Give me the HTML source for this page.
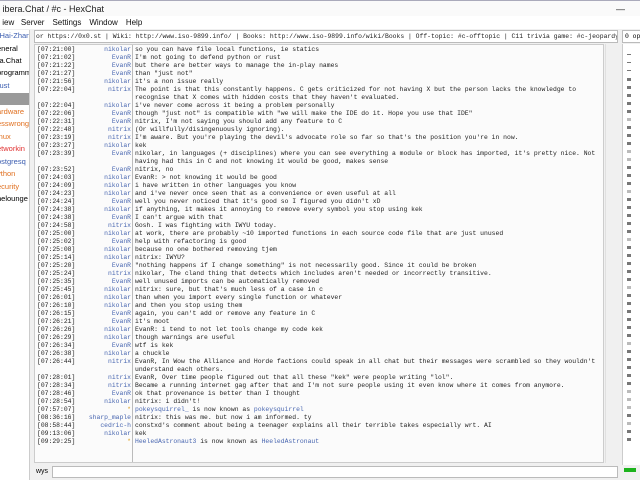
<!DOCTYPE html>
<html><head><meta charset="utf-8"><style>
*{margin:0;padding:0;box-sizing:border-box}
body{width:640px;height:480px;overflow:hidden;background:#f0f0f0;font-family:"Liberation Sans",sans-serif;position:relative}
.abs{position:absolute}
#title{left:0;top:0;width:640px;height:16px;background:#fafafa;font-size:9px;line-height:16px;color:#222;border-top:1px solid #aab}
#menu{left:0;top:16px;width:640px;height:13px;background:#fff;font-size:8px;line-height:13px;color:#111}
#menu span{margin-right:8px}
#side{left:0;top:30px;width:30px;height:450px;background:#fff;border-right:1px solid #ccc;font-size:7.5px;overflow:hidden}
#side div{position:absolute;left:-3px;white-space:nowrap;height:12px;line-height:12px;width:34px}
#topic{left:34px;top:30px;width:584px;height:13px;background:#fff;border:1px solid #bbb;font-family:"Liberation Mono",monospace;font-size:6.4px;line-height:11px;padding-left:1px;white-space:nowrap;overflow:hidden;color:#222}
#chat{left:34px;top:44px;width:570px;height:419px;background:#fbfbfb;border:1px solid #ccc;overflow:hidden}
#sep{left:97px;top:0;width:1px;height:419px;background:#bbb}
.r{position:absolute;left:0;height:8px;font-family:"Liberation Mono",monospace;font-size:6.4px;line-height:8px;white-space:nowrap;color:#222}
.t{position:absolute;left:2px}
.n{position:absolute;right:-96px;width:70px;text-align:right;color:#4866b0}
.r .m{position:absolute;left:100px}
#sb{left:605px;top:44px;width:13px;height:419px;background:#f0f0f0;border-left:1px solid #e0e0e0}
#ops{left:622px;top:30px;width:20px;height:13px;background:#fff;border:1px solid #bbb;font-family:"Liberation Mono",monospace;font-size:6.4px;line-height:11px;padding-left:2px}
#ul{left:622px;top:44px;width:20px;height:421px;background:#fff;border-left:1px solid #ccc}
#ul i{position:absolute;left:4px;width:4px;height:3px;background:#777}
#inp{left:34px;top:465px;width:584px;height:14px;font-size:7px;line-height:14px}
#inbox{left:52px;top:466px;width:566px;height:12px;background:#fff;border:1px solid #bbb}
#lag{left:624px;top:468px;width:12px;height:4px;background:#1db31d}
</style></head><body>
<div id="title" class="abs">&nbsp;ibera.Chat / #c - HexChat<span style="position:absolute;left:616px;top:0">—</span></div>
<div id="menu" class="abs">&nbsp;iew&nbsp;&nbsp;&nbsp;<span>Server</span><span>Settings</span><span>Window</span><span>Help</span></div>
<div id="side" class="abs">
<div style="top:0;color:#3b5db0">-Hai-Zhan</div>
<div style="top:13px">eneral</div>
<div style="top:25px">ra.Chat</div>
<div style="top:37px">programm</div>
<div style="top:50px;color:#3b5db0">rust</div>
<div style="top:63px;background:#9a9a9a;left:0"></div>
<div style="top:76px;color:#e07020">ardware</div>
<div style="top:88px;color:#e07020">esswrong</div>
<div style="top:101px;color:#e07020">inux</div>
<div style="top:113px;color:#e03030">etworkin</div>
<div style="top:126px;color:#3b5db0">ostgresq</div>
<div style="top:138px;color:#e07020">ython</div>
<div style="top:151px;color:#e07020">ecurity</div>
<div style="top:163px">helounge</div>
</div>
<div id="topic" class="abs">or https://0x0.st | Wiki: http://www.iso-9899.info/ | Books: http://www.iso-9899.info/wiki/Books | Off-topic: #c-offtopic | C11 trivia game: #c-jeopardy</div>
<div id="chat" class="abs">
<div id="sep" class="abs"></div>
<div class="r" style="top:1px"><span class="t">[07:21:00]</span><span class="n">nikolar</span><span class="m">so you can have file local functions, ie statics</span></div>
<div class="r" style="top:9px"><span class="t">[07:21:02]</span><span class="n">EvanR</span><span class="m">I'm not going to defend python or rust</span></div>
<div class="r" style="top:17px"><span class="t">[07:21:22]</span><span class="n">EvanR</span><span class="m">but there are better ways to manage the in-play names</span></div>
<div class="r" style="top:25px"><span class="t">[07:21:27]</span><span class="n">EvanR</span><span class="m">than "just not"</span></div>
<div class="r" style="top:33px"><span class="t">[07:21:56]</span><span class="n">nikolar</span><span class="m">it's a non issue really</span></div>
<div class="r" style="top:41px"><span class="t">[07:22:04]</span><span class="n">nitrix</span><span class="m">The point is that this constantly happens. C gets criticized for not having X but the person lacks the knowledge to</span></div>
<div class="r" style="top:49px"><span class="m">recognise that X comes with hidden costs that they haven't evaluated.</span></div>
<div class="r" style="top:57px"><span class="t">[07:22:04]</span><span class="n">nikolar</span><span class="m">i've never come across it being a problem personally</span></div>
<div class="r" style="top:65px"><span class="t">[07:22:06]</span><span class="n">EvanR</span><span class="m">though "just not" is compatible with "we will make the IDE do it. Hope you use that IDE"</span></div>
<div class="r" style="top:73px"><span class="t">[07:22:31]</span><span class="n">EvanR</span><span class="m">nitrix, I'm not saying you should add any feature to C</span></div>
<div class="r" style="top:81px"><span class="t">[07:22:48]</span><span class="n">nitrix</span><span class="m">(Or willfully/disingenuously ignoring).</span></div>
<div class="r" style="top:89px"><span class="t">[07:23:19]</span><span class="n">nitrix</span><span class="m">I'm aware. But you're playing the devil's advocate role so far so that's the position you're in now.</span></div>
<div class="r" style="top:97px"><span class="t">[07:23:27]</span><span class="n">nikolar</span><span class="m">kek</span></div>
<div class="r" style="top:105px"><span class="t">[07:23:39]</span><span class="n">EvanR</span><span class="m">nikolar, in languages (+ disciplines) where you can see everything a module or block has imported, it's pretty nice. Not</span></div>
<div class="r" style="top:113px"><span class="m">having had this in C and not knowing it would be good, makes sense</span></div>
<div class="r" style="top:121px"><span class="t">[07:23:52]</span><span class="n">EvanR</span><span class="m">nitrix, no</span></div>
<div class="r" style="top:129px"><span class="t">[07:24:03]</span><span class="n">nikolar</span><span class="m">EvanR: &gt; not knowing it would be good</span></div>
<div class="r" style="top:137px"><span class="t">[07:24:09]</span><span class="n">nikolar</span><span class="m">i have written in other languages you know</span></div>
<div class="r" style="top:145px"><span class="t">[07:24:23]</span><span class="n">nikolar</span><span class="m">and i've never once seen that as a convenience or even useful at all</span></div>
<div class="r" style="top:153px"><span class="t">[07:24:24]</span><span class="n">EvanR</span><span class="m">well you never noticed that it's good so I figured you didn't xD</span></div>
<div class="r" style="top:161px"><span class="t">[07:24:38]</span><span class="n">nikolar</span><span class="m">if anything, it makes it annoying to remove every symbol you stop using kek</span></div>
<div class="r" style="top:169px"><span class="t">[07:24:38]</span><span class="n">EvanR</span><span class="m">I can't argue with that</span></div>
<div class="r" style="top:177px"><span class="t">[07:24:58]</span><span class="n">nitrix</span><span class="m">Gosh. I was fighting with IWYU today.</span></div>
<div class="r" style="top:185px"><span class="t">[07:25:00]</span><span class="n">nikolar</span><span class="m">at work, there are probably ~10 imported functions in each source code file that are just unused</span></div>
<div class="r" style="top:193px"><span class="t">[07:25:02]</span><span class="n">EvanR</span><span class="m">help with refactoring is good</span></div>
<div class="r" style="top:201px"><span class="t">[07:25:08]</span><span class="n">nikolar</span><span class="m">because no one bothered removing tjem</span></div>
<div class="r" style="top:209px"><span class="t">[07:25:14]</span><span class="n">nikolar</span><span class="m">nitrix: IWYU?</span></div>
<div class="r" style="top:217px"><span class="t">[07:25:20]</span><span class="n">EvanR</span><span class="m">"nothing happens if I change something" is not necessarily good. Since it could be broken</span></div>
<div class="r" style="top:225px"><span class="t">[07:25:24]</span><span class="n">nitrix</span><span class="m">nikolar, The cland thing that detects which includes aren't needed or incorrectly transitive.</span></div>
<div class="r" style="top:233px"><span class="t">[07:25:35]</span><span class="n">EvanR</span><span class="m">well unused imports can be automatically removed</span></div>
<div class="r" style="top:241px"><span class="t">[07:25:45]</span><span class="n">nikolar</span><span class="m">nitrix: sure, but that's much less of a case in c</span></div>
<div class="r" style="top:249px"><span class="t">[07:26:01]</span><span class="n">nikolar</span><span class="m">than when you import every single function or whatever</span></div>
<div class="r" style="top:257px"><span class="t">[07:26:10]</span><span class="n">nikolar</span><span class="m">and then you stop using them</span></div>
<div class="r" style="top:265px"><span class="t">[07:26:15]</span><span class="n">EvanR</span><span class="m">again, you can't add or remove any feature in C</span></div>
<div class="r" style="top:273px"><span class="t">[07:26:21]</span><span class="n">EvanR</span><span class="m">it's moot</span></div>
<div class="r" style="top:281px"><span class="t">[07:26:26]</span><span class="n">nikolar</span><span class="m">EvanR: i tend to not let tools change my code kek</span></div>
<div class="r" style="top:289px"><span class="t">[07:26:29]</span><span class="n">nikolar</span><span class="m">though warnings are useful</span></div>
<div class="r" style="top:297px"><span class="t">[07:26:34]</span><span class="n">EvanR</span><span class="m">wtf is kek</span></div>
<div class="r" style="top:305px"><span class="t">[07:26:38]</span><span class="n">nikolar</span><span class="m">a chuckle</span></div>
<div class="r" style="top:313px"><span class="t">[07:26:44]</span><span class="n">nitrix</span><span class="m">EvanR, In Wow the Alliance and Horde factions could speak in all chat but their messages were scrambled so they wouldn't</span></div>
<div class="r" style="top:321px"><span class="m">understand each others.</span></div>
<div class="r" style="top:329px"><span class="t">[07:28:01]</span><span class="n">nitrix</span><span class="m">EvanR, Over time people figured out that all these "kek" were people writing "lol".</span></div>
<div class="r" style="top:337px"><span class="t">[07:28:34]</span><span class="n">nitrix</span><span class="m">Became a running internet gag after that and I'm not sure people using it even know where it comes from anymore.</span></div>
<div class="r" style="top:345px"><span class="t">[07:28:46]</span><span class="n">EvanR</span><span class="m">ok that provenance is better than I thought</span></div>
<div class="r" style="top:353px"><span class="t">[07:28:54]</span><span class="n">nikolar</span><span class="m">nitrix: i didn't!</span></div>
<div class="r" style="top:361px"><span class="t">[07:57:07]</span><span class="n" style="color:#e0a020">*</span><span class="m"><span style="color:#4866b0">pokeysquirrel_</span> is now known as <span style="color:#4866b0">pokeysquirrel</span></span></div>
<div class="r" style="top:369px"><span class="t">[08:36:16]</span><span class="n">sharp_maple</span><span class="m">nitrix: this was me. but now i am informed. ty</span></div>
<div class="r" style="top:377px"><span class="t">[08:58:44]</span><span class="n">cedric-h</span><span class="m">constxd's comment about being a teenager explains all their terrible takes especially wrt. AI</span></div>
<div class="r" style="top:385px"><span class="t">[09:13:06]</span><span class="n">nikolar</span><span class="m">kek</span></div>
<div class="r" style="top:393px"><span class="t">[09:29:25]</span><span class="n" style="color:#e0a020">*</span><span class="m"><span style="color:#4866b0">HeeledAstronaut3</span> is now known as <span style="color:#4866b0">HeeledAstronaut</span></span></div>
</div>
<div id="sb" class="abs"></div>
<div id="ops" class="abs">0 op</div>
<div id="ul" class="abs">
<i style="top:10px;height:1px"></i><i style="top:18px;height:1px"></i><i style="top:26px;height:1px"></i>
<i style="top:34px"></i><i style="top:42px"></i><i style="top:50px"></i><i style="top:58px"></i><i style="top:66px"></i><i style="top:74px;background:#bbb"></i><i style="top:82px"></i><i style="top:90px"></i><i style="top:98px"></i><i style="top:106px;background:#bbb"></i><i style="top:114px;background:#bbb"></i><i style="top:122px"></i><i style="top:130px"></i><i style="top:138px"></i><i style="top:146px;background:#bbb"></i><i style="top:154px"></i><i style="top:162px"></i><i style="top:170px"></i><i style="top:178px"></i><i style="top:186px"></i><i style="top:194px;background:#bbb"></i><i style="top:202px"></i><i style="top:210px"></i><i style="top:218px"></i><i style="top:226px"></i><i style="top:234px"></i><i style="top:242px;background:#bbb"></i><i style="top:250px"></i><i style="top:258px"></i><i style="top:266px"></i><i style="top:274px"></i><i style="top:282px"></i><i style="top:290px"></i><i style="top:298px;background:#bbb"></i><i style="top:306px"></i><i style="top:314px"></i><i style="top:322px"></i><i style="top:330px"></i><i style="top:338px"></i><i style="top:346px;background:#bbb"></i><i style="top:354px;background:#bbb"></i><i style="top:362px;background:#bbb"></i><i style="top:370px"></i><i style="top:378px;background:#bbb"></i><i style="top:386px"></i><i style="top:394px"></i>
</div>
<div id="inp" class="abs">&nbsp;wys</div>
<div id="inbox" class="abs"></div>
<div id="lag" class="abs"></div>
</body></html>
